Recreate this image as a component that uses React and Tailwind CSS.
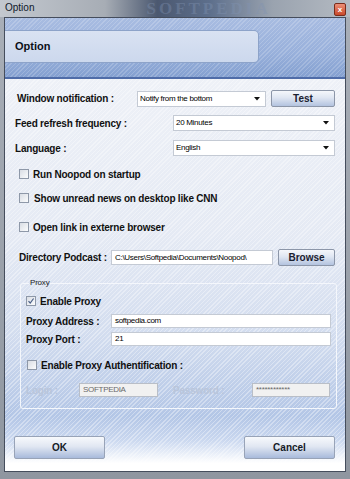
import React from 'react';

const font = { fontFamily: '"Liberation Sans", Arial, sans-serif' };

const Checkbox = ({ checked }) => (
  <span className="flex h-[10px] w-[10px] shrink-0 items-center justify-center border border-[#8e98a8] bg-[linear-gradient(135deg,#d9dde4,#fbfcfd)]">
    {checked && (
      <svg width="8" height="8" viewBox="0 0 8 8">
        <path d="M1.5 4.2 L3.2 6 L6.6 1.5" fill="none" stroke="#4a5f86" strokeWidth="1.2" />
      </svg>
    )}
  </span>
);

const Select = ({ value, width }) => (
  <div className={`flex h-[16px] items-center justify-between border border-[#c4cad4] bg-white pl-[2px] pr-[5px] ${width}`}>
    <span className="text-[8px] tracking-[-0.3px] text-black">{value}</span>
    <svg width="6" height="4" viewBox="0 0 6 4">
      <path d="M0 0 H6 L3 3.5 Z" fill="#111" />
    </svg>
  </div>
);

const Input = ({ value, width, disabled }) => (
  <div
    className={`flex h-[14px] items-center border pl-[3px] text-[8px] tracking-[-0.3px] ${width} ${
      disabled ? 'border-[#b9bec7] bg-[#f1f1f1] text-[#6a6a6a]' : 'border-[#c4cad4] bg-white text-black'
    }`}
  >
    {value}
  </div>
);

const SmallButton = ({ label, width }) => (
  <div className={`flex h-[17px] items-center justify-center rounded-[2px] border border-[#8c96a8] bg-[linear-gradient(180deg,#f5f7fb_0%,#dfe6f2_45%,#b3c3df_100%)] text-[10px] font-bold text-[#1b2130] ${width}`}>
    {label}
  </div>
);

const BigButton = ({ label }) => (
  <div className="flex h-[23px] w-[91px] items-center justify-center rounded-[2px] border border-[#98a3b7] bg-[linear-gradient(180deg,#f7f9fc_0%,#e1e7f2_45%,#a8badb_100%)] text-[10px] font-bold text-[#151a26]">
    {label}
  </div>
);

const Label = ({ children, className = '' }) => (
  <span className={`text-[10px] font-bold tracking-[-0.2px] text-[#111] ${className}`}>{children}</span>
);

export default function App() {
  return (
    <div style={font} className="flex h-[479px] w-[350px] flex-col overflow-hidden bg-[linear-gradient(180deg,#a9afb8,#8f96a0)]">
      {/* title bar */}
      <div className="flex h-[17px] shrink-0 items-start bg-[linear-gradient(90deg,#c3c8cf_0%,#a7adb5_30%,#4b5870_45%,#5d6f8c_60%,#9aa3af_78%,#b4bac2_100%)]">
        <span className="ml-[5px] mt-[2px] text-[10px] leading-[12px] text-[#10182a]">Option</span>
        <span
          style={{ fontFamily: '"Liberation Serif", serif' }}
          className="ml-[112px] text-[17px] font-bold leading-[17px] tracking-[3px] text-[#8193b2]/40"
        >
          SOFTPEDIA
        </span>
        <div className="ml-auto mr-[4px] mt-[3px] flex h-[13px] w-[12px] items-center justify-center rounded-[2px] border border-[#7a2c1c] bg-[linear-gradient(180deg,#ec8f77,#c9482a)]">
          <span className="text-[8px] font-bold leading-none text-white">x</span>
        </div>
      </div>

      {/* client */}
      <div className="mx-[4px] flex h-[455px] flex-col border border-[#454d5c]">
        {/* header band */}
        <div className="flex h-[59px] shrink-0 flex-col bg-[image:repeating-linear-gradient(135deg,rgba(255,255,255,0.18)_0px,rgba(255,255,255,0.18)_1px,transparent_1px,transparent_3px),linear-gradient(180deg,#a8bce1_0%,#98b0db_60%,#84a0d0_100%)]">
          <div className="mt-[12px] flex h-[33px] w-[254px] items-center rounded-r-[5px] border border-l-0 border-[#8da3c9] bg-[linear-gradient(180deg,#d9e2f2,#ccd8ed)] pl-[10px]">
            <span className="text-[11px] font-bold text-[#0b0f18]">Option</span>
          </div>
        </div>
        <div className="h-[2px] shrink-0 bg-[#4f6ca8]" />

        {/* content */}
        <div className="flex flex-1 flex-col bg-[image:repeating-linear-gradient(135deg,rgba(255,255,255,0.35)_0px,rgba(255,255,255,0.35)_1px,transparent_1px,transparent_3px),linear-gradient(180deg,#eef1f7_0%,#e5eaf4_40%,#d3ddef_65%,#b3c6e6_86%,#c9d7ef_92%,#ffffff_98%)] pr-[10px]">
          {/* window notification */}
          <div className="mt-[11px] flex h-[17px] items-center pl-[12px]">
            <Label className="w-[120px]">Window notification :</Label>
            <Select value="Notify from the bottom" width="w-[129px]" />
            <div className="ml-[5px]">
              <SmallButton label="Test" width="w-[64px]" />
            </div>
          </div>

          <div className="mt-[8px] flex h-[16px] items-center pl-[10px]">
            <Label className="w-[158px]">Feed refresh frequency :</Label>
            <Select value="20 Minutes" width="w-[162px]" />
          </div>

          <div className="mt-[9px] flex h-[16px] items-center pl-[10px]">
            <Label className="w-[158px]">Language :</Label>
            <Select value="English" width="w-[162px]" />
          </div>

          <div className="mt-[11px] flex h-[14px] items-center gap-[4px] pl-[14px]">
            <Checkbox />
            <Label>Run Noopod on startup</Label>
          </div>
          <div className="mt-[10px] flex h-[14px] items-center gap-[5px] pl-[14px]">
            <Checkbox />
            <Label>Show unread news on desktop like CNN</Label>
          </div>
          <div className="mt-[15px] flex h-[14px] items-center gap-[4px] pl-[14px]">
            <Checkbox />
            <Label>Open link in externe browser</Label>
          </div>

          <div className="mt-[15px] flex h-[17px] items-center pl-[14px]">
            <Label className="w-[92px]">Directory Podcast :</Label>
            <Input value="C:\Users\Softpedia\Documents\Noopod\" width="w-[162px] h-[15px]" />
            <div className="ml-[5px]">
              <SmallButton label="Browse" width="w-[57px]" />
            </div>
          </div>

          {/* proxy group */}
          <fieldset className="ml-[15px] mt-[12px] h-[131px] w-[315px] rounded-[3px] border border-[#f4f7fc] px-[5px]">
            <legend className="ml-[3px] px-[1px] text-[8px] leading-[10px] tracking-[-0.2px] text-[#222]">Proxy</legend>
            <div className="mt-[6px] flex h-[14px] items-center gap-[4px]">
              <Checkbox checked />
              <Label>Enable Proxy</Label>
            </div>
            <div className="mt-[6px] flex h-[14px] items-center">
              <Label className="w-[85px]">Proxy Address :</Label>
              <Input value="softpedia.com" width="w-[220px]" />
            </div>
            <div className="mt-[4px] flex h-[14px] items-center">
              <Label className="w-[85px]">Proxy Port :</Label>
              <Input value="21" width="w-[220px]" />
            </div>
            <div className="mt-[12px] flex h-[14px] items-center gap-[4px] pl-[1px]">
              <Checkbox />
              <Label>Enable Proxy Authentification :</Label>
            </div>
            <div className="mt-[11px] flex h-[14px] items-center">
              <Label className="w-[53px] !text-[#b9c5da]">Login :</Label>
              <Input value="SOFTPEDIA" width="w-[79px]" disabled />
              <Label className="ml-[15px] w-[79px] !text-[#b9c5da]">Password :</Label>
              <Input value="************" width="w-[78px]" disabled />
            </div>
          </fieldset>

          <div className="mt-[27px] flex items-center justify-between pl-[9px]">
            <BigButton label="OK" />
            <BigButton label="Cancel" />
          </div>
        </div>
      </div>
    </div>
  );
}
